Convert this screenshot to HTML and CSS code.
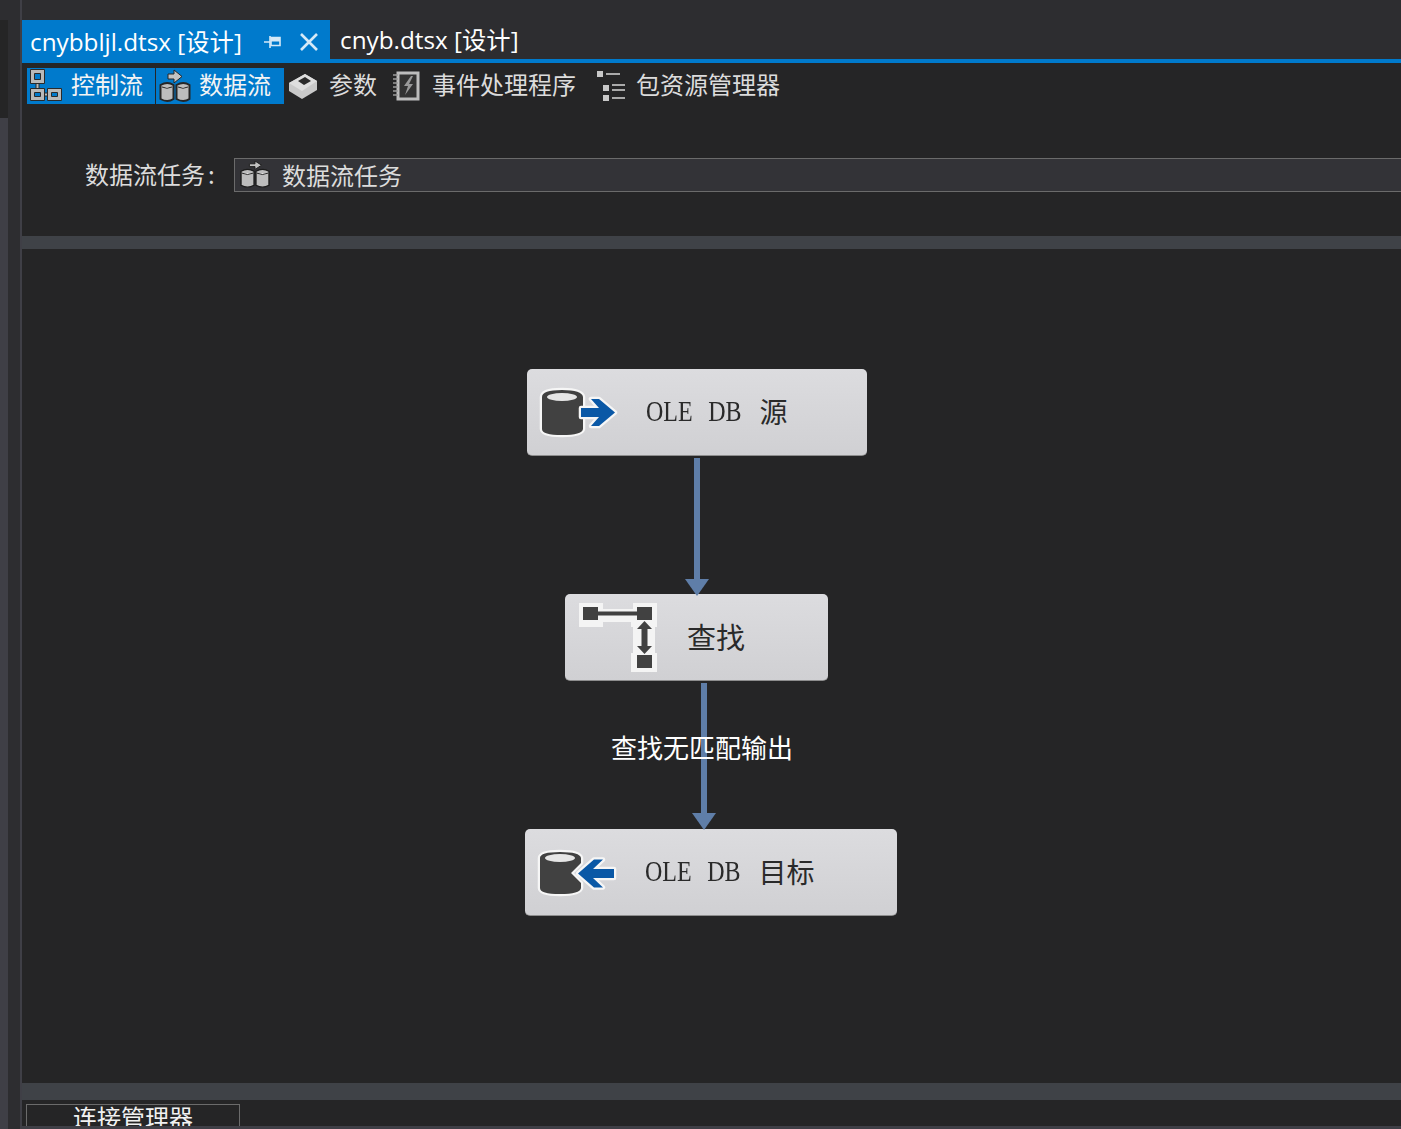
FILE: index.html
```html
<!DOCTYPE html>
<html lang="zh">
<head>
<meta charset="utf-8">
<title>cnybbljl.dtsx [设计]</title>
<link rel="stylesheet" href="styles.css">
</head>
<body>
<div class="app">
  <aside class="rail"><div class="rail-dark"></div><div class="rail-light"></div></aside>
  <main class="main">
    <div class="tabs">
      <div class="tab active">
        <span class="tab-title">cnybbljl.dtsx [设计]</span>
        <svg class="pin" width="17" height="14" viewBox="0 0 17 14"><path d="M0 7h6M6 1v12" fill="none" stroke="#d5e9f7" stroke-width="1.600"/><path d="M7 2.500h9v8H7z" fill="none" stroke="#d5e9f7" stroke-width="1.600"/><path d="M7 3h9v3.500H7z" fill="#d5e9f7"/></svg>
        <svg class="close" width="20" height="18" viewBox="0 0 20 18"><path d="M2 1l16 16M18 1L2 17" fill="none" stroke="#d5e9f7" stroke-width="2.600"/></svg>
      </div>
      <div class="tab"><span class="tab-title">cnyb.dtsx [设计]</span></div>
    </div>
    <div class="accent"></div>
    <nav class="views">
      <div class="view on first">
        <svg class="ico" width="36" height="34" viewBox="0 0 36 34"><g fill="#b9b9b9" stroke="#2a2a2a"><path fill-rule="evenodd" d="M3.500.5h14v14h-14zM7.500 4.500v6h6v-6zM3.500 19.500h14v12h-14zM7.500 23.500v4h6v-4zM20.500 19.500h14v12h-14zM24.500 23.500v4h6v-4z"/><path d="M9 14.500h3v5H9zM17.500 24h3v3h-3z"/></g></svg>
        <span>控制流</span>
      </div>
      <div class="view on second">
        <svg class="ico" width="32" height="34" viewBox="0 0 32 34"><g stroke="#262626"><path d="M9 5h6V1l8 6.500-8 6.500v-4H9z" fill="#c2c2c2"/><path d="M1.500 16q7-4 13 0v14q-6 4-13 0zM17.500 16q7-4 13 0v14q-6 4-13 0z" fill="#bdbdbd" stroke-width="2"/><path d="M3 18q5 2.500 10 0M19 18q5 2.500 10 0" fill="#eee" stroke-width="1"/></g></svg>
        <span>数据流</span>
      </div>
      <div class="view param">
        <svg class="ico" width="30" height="28" viewBox="0 0 30 28"><path d="M1 11 17 2l12 7v9L14 27 1 19z" fill="#c9c9c9"/><path d="M1 11l13 8 15-10-12-7z" fill="#dedede"/><path d="M10 9l7-4 6 4-7 4z" fill="#2b2b2b"/></svg>
        <span>参数</span>
      </div>
      <div class="view event">
        <svg class="ico" width="28" height="30" viewBox="0 0 28 30"><path d="M6 2h20v26H6z" fill="#333" stroke="#bdbdbd" stroke-width="3"/><path d="M19 5l-7 10h4l-3 9 8-11h-4l4-8z" fill="#9a9a9a"/><path d="M1 4h5M1 8h5M1 12h5M1 16h5M1 20h5M1 24h5" stroke="#9a9a9a" stroke-width="1.500"/></svg>
        <span>事件处理程序</span>
      </div>
      <div class="view pkg">
        <svg class="ico" width="32" height="32" viewBox="0 0 32 32"><path d="M1 1h6v6H1zM7 15h6v6H7zM7 25h6v6H7z" fill="#c8c8c8"/><path d="M10 4h14M16 15h13M16 20h13M16 28h13" stroke="#aaa" stroke-width="2"/></svg>
        <span>包资源管理器</span>
      </div>
    </nav>
    <div class="task-row">
      <label class="task-label">数据流任务<span class="colon">:</span></label>
      <div class="task-field">
        <svg class="ico" width="30" height="28" viewBox="0 0 32 30"><g stroke="#1c1c1c"><path d="M10 3h6V0l7 4.500-7 4.500V6h-6z" fill="#c2c2c2"/><path d="M1 11q7-4 14 0v15q-7 4-14 0zM17 11q7-4 14 0v15q-7 4-14 0z" fill="#bdbdbd" stroke-width="1.500"/><path d="M2 13q6 3 12 0M18 13q6 3 12 0" fill="#eee"/></g></svg>
        <span>数据流任务</span>
      </div>
    </div>
    <div class="bar top-bar"></div>
    <section class="canvas">
      <div class="node source">
        <svg class="node-ico" width="82" height="54" viewBox="0 0 82 54"><g class="halo"><path d="M3 11q0-7 20-7t21 7v32q-1 6-21 6T3 43z" fill="#414141"/><path d="M42 22h18l-8-9h8l16 13.500-16 13.500h-8l8-9H42z" fill="#0a58a6"/></g><ellipse cx="23" cy="11" rx="15" ry="4" fill="#e6e6e6"/></svg>
        <div class="node-text"><span class="latin">OLE DB</span><i>源</i></div>
      </div>
      <div class="node lookup">
        <svg class="node-ico" width="80" height="72" viewBox="0 0 80 72"><path d="M0 2h24v6h30V2h24v24h-2v26h2v19H52V52h2V26h-2v-5H24v5H0z" fill="#f4f4f4"/><path d="M4 6h15v13H4zM58 6h15v13H58zM58 54h15v13H58zM19 10.500h39v4H19z" fill="#414141"/><path d="M65.500 20l7.500 8h-4.500v17h4.500l-7.500 8-7.500-8h4.500V28H58z" fill="#414141"/></svg>
        <div class="node-text"><i>查找</i></div>
      </div>
      <div class="node dest">
        <svg class="node-ico" width="82" height="54" viewBox="0 0 82 54"><g class="halo"><path d="M3 12q0-6 20-6t21 6v5L34 27l10 10v5q-1 6-21 6T3 42z" fill="#414141"/><path d="M41 27.500l16-14h9l-10 9.500h21v9H56l10 9.500h-9z" fill="#0a58a6"/></g><ellipse cx="23" cy="12" rx="15" ry="4" fill="#e6e6e6"/></svg>
        <div class="node-text"><span class="latin">OLE DB</span><i>目标</i></div>
      </div>
      <div class="link link-a"><div class="shaft"></div><div class="head"></div></div>
      <div class="link link-b"><div class="shaft"></div><div class="head"></div></div>
      <div class="link-label">查找无匹配输出</div>
    </section>
    <div class="bar bottom-bar"></div>
    <div class="tray">
      <div class="tray-tab">连接管理器</div>
    </div>
  </main>
</div>
</body>
</html>
```
FILE: styles.css
```css
* { box-sizing: border-box; }
html, body { margin: 0; height: 100%; overflow: hidden; }
body { background: #2d2d30; color: #f1f1f1; font-family: "Noto Sans CJK SC", sans-serif; }
.app { display: flex; width: 1401px; height: 1129px; }
.rail { width: 22px; flex: none; padding-top: 20px; border-right: 2px solid #3f3f46; display: flex; flex-direction: column; align-items: flex-start; }
.rail-dark { width: 8px; height: 98px; background: #252526; }
.rail-light { width: 8px; flex: 1; background: #3f3f46; }
.main { flex: 1; min-width: 0; display: flex; flex-direction: column; background: #252526; }
.tabs { height: 59px; flex: none; display: flex; align-items: flex-end; padding-top: 20px; background: #2d2d30; }
.tab { height: 39px; display: flex; align-items: center; padding: 0 10px 2px 10px; font-family: "Open Sans", "Noto Sans CJK SC", sans-serif; font-size: 24.300px; color: #fff; white-space: nowrap; }
.tab.active { width: 308px; background: #007acc; padding-left: 8px; padding-top: 1px; padding-bottom: 0; }
.pin { margin-left: 22px; margin-top: 4px; }
.close { margin-left: 18px; margin-top: 4px; }
.accent { height: 4px; flex: none; background: #007acc; }
.views { height: 95px; flex: none; display: flex; align-items: flex-start; padding: 5px 0 0 5px; font-size: 24px; color: #dcdcdc; }
.view { height: 36px; display: flex; align-items: center; white-space: nowrap; }
.view span { padding-bottom: 6px; }
.view.on { background: #007acc; color: #f4f4f4; }
.ico { flex: none; }
.view.first { width: 128px; }
.view.first span { margin-left: 8px; }
.view.second { width: 128px; margin-left: 1px; padding-left: 3px; }
.view.second span { margin-left: 8px; }
.view.param { margin-left: 4px; }
.view.param span { margin-left: 11px; }
.view.event { margin-left: 15px; }
.view.event span { margin-left: 12px; }
.view.pkg { margin-left: 20px; }
.view.pkg span { margin-left: 8px; }
.task-row { height: 78px; flex: none; display: flex; align-items: flex-start; font-size: 24px; color: #dcdcdc; }
.task-label { width: 212px; padding-left: 63px; white-space: nowrap; line-height: 32px; }
.colon { margin-left: 3px; }
.task-field { flex: 1; height: 34px; display: flex; align-items: center; background: #333337; border: 1px solid #6b6b6b; border-right: 0; padding-left: 5px; }
.task-field span { margin-left: 12px; padding-bottom: 2px; }
.bar { flex: none; background: #3f4247; }
.top-bar { height: 13px; }
.bottom-bar { height: 17px; }
.canvas { position: relative; height: 834px; flex: none; background: #252526; }
.node { position: absolute; height: 87px; border-radius: 5px; background: linear-gradient(#dcdcdf, #d0d0d3); border-bottom: 1px solid #8d8d8d; color: #2a2a2a; display: flex; align-items: center; }
.node i { font-style: normal; font-family: "Noto Sans CJK SC", sans-serif; font-size: 28px; }
.source { left: 504.500px; top: 120px; width: 340.500px; }
.lookup { left: 543px; top: 345px; width: 263px; }
.dest { left: 503px; top: 580px; width: 372px; }
.node-ico { position: absolute; left: 12px; top: 17px; filter: blur(.5px); }
.lookup .node-ico { left: 14px; top: 7px; }
.halo path { stroke: #f6f6f6; stroke-width: 4.500px; stroke-linejoin: round; paint-order: stroke; }
.node-text { display: flex; align-items: center; white-space: nowrap; padding-bottom: 3px; }
.latin { display: inline-block; font-family: "Liberation Serif", serif; font-size: 30px; word-spacing: 12px; transform: scaleX(.8); transform-origin: left center; margin-right: -6px; }
.source .node-text { margin-left: 119.500px; }
.lookup .node-text { margin-left: 122px; }
.lookup .node-text i { font-size: 29px; }
.dest .node-text { margin-left: 120px; }
.link { position: absolute; width: 24px; display: flex; flex-direction: column; align-items: center; }
.link-a { left: 663px; top: 209px; height: 138px; }
.link-b { left: 669.500px; top: 434px; height: 147px; }
.shaft { flex: 1; width: 6px; background: #5f7ea8; }
.head { flex: none; width: 0; height: 0; border-left: 12px solid transparent; border-right: 12px solid transparent; border-top: 17px solid #5f7ea8; }
.link-label { position: absolute; left: 589px; top: 482px; font-size: 26px; line-height: 32px; color: #fff; white-space: nowrap; z-index: 2; }
.tray { flex: 1; min-height: 0; padding: 4px 0 0 4px; border-bottom: 3px solid #3f3f46; overflow: hidden; }
.tray-tab { width: 214px; height: 40px; border: 1px solid #6b6b6b; text-align: center; font-size: 24px; line-height: 23px; color: #f1f1f1; }
```
